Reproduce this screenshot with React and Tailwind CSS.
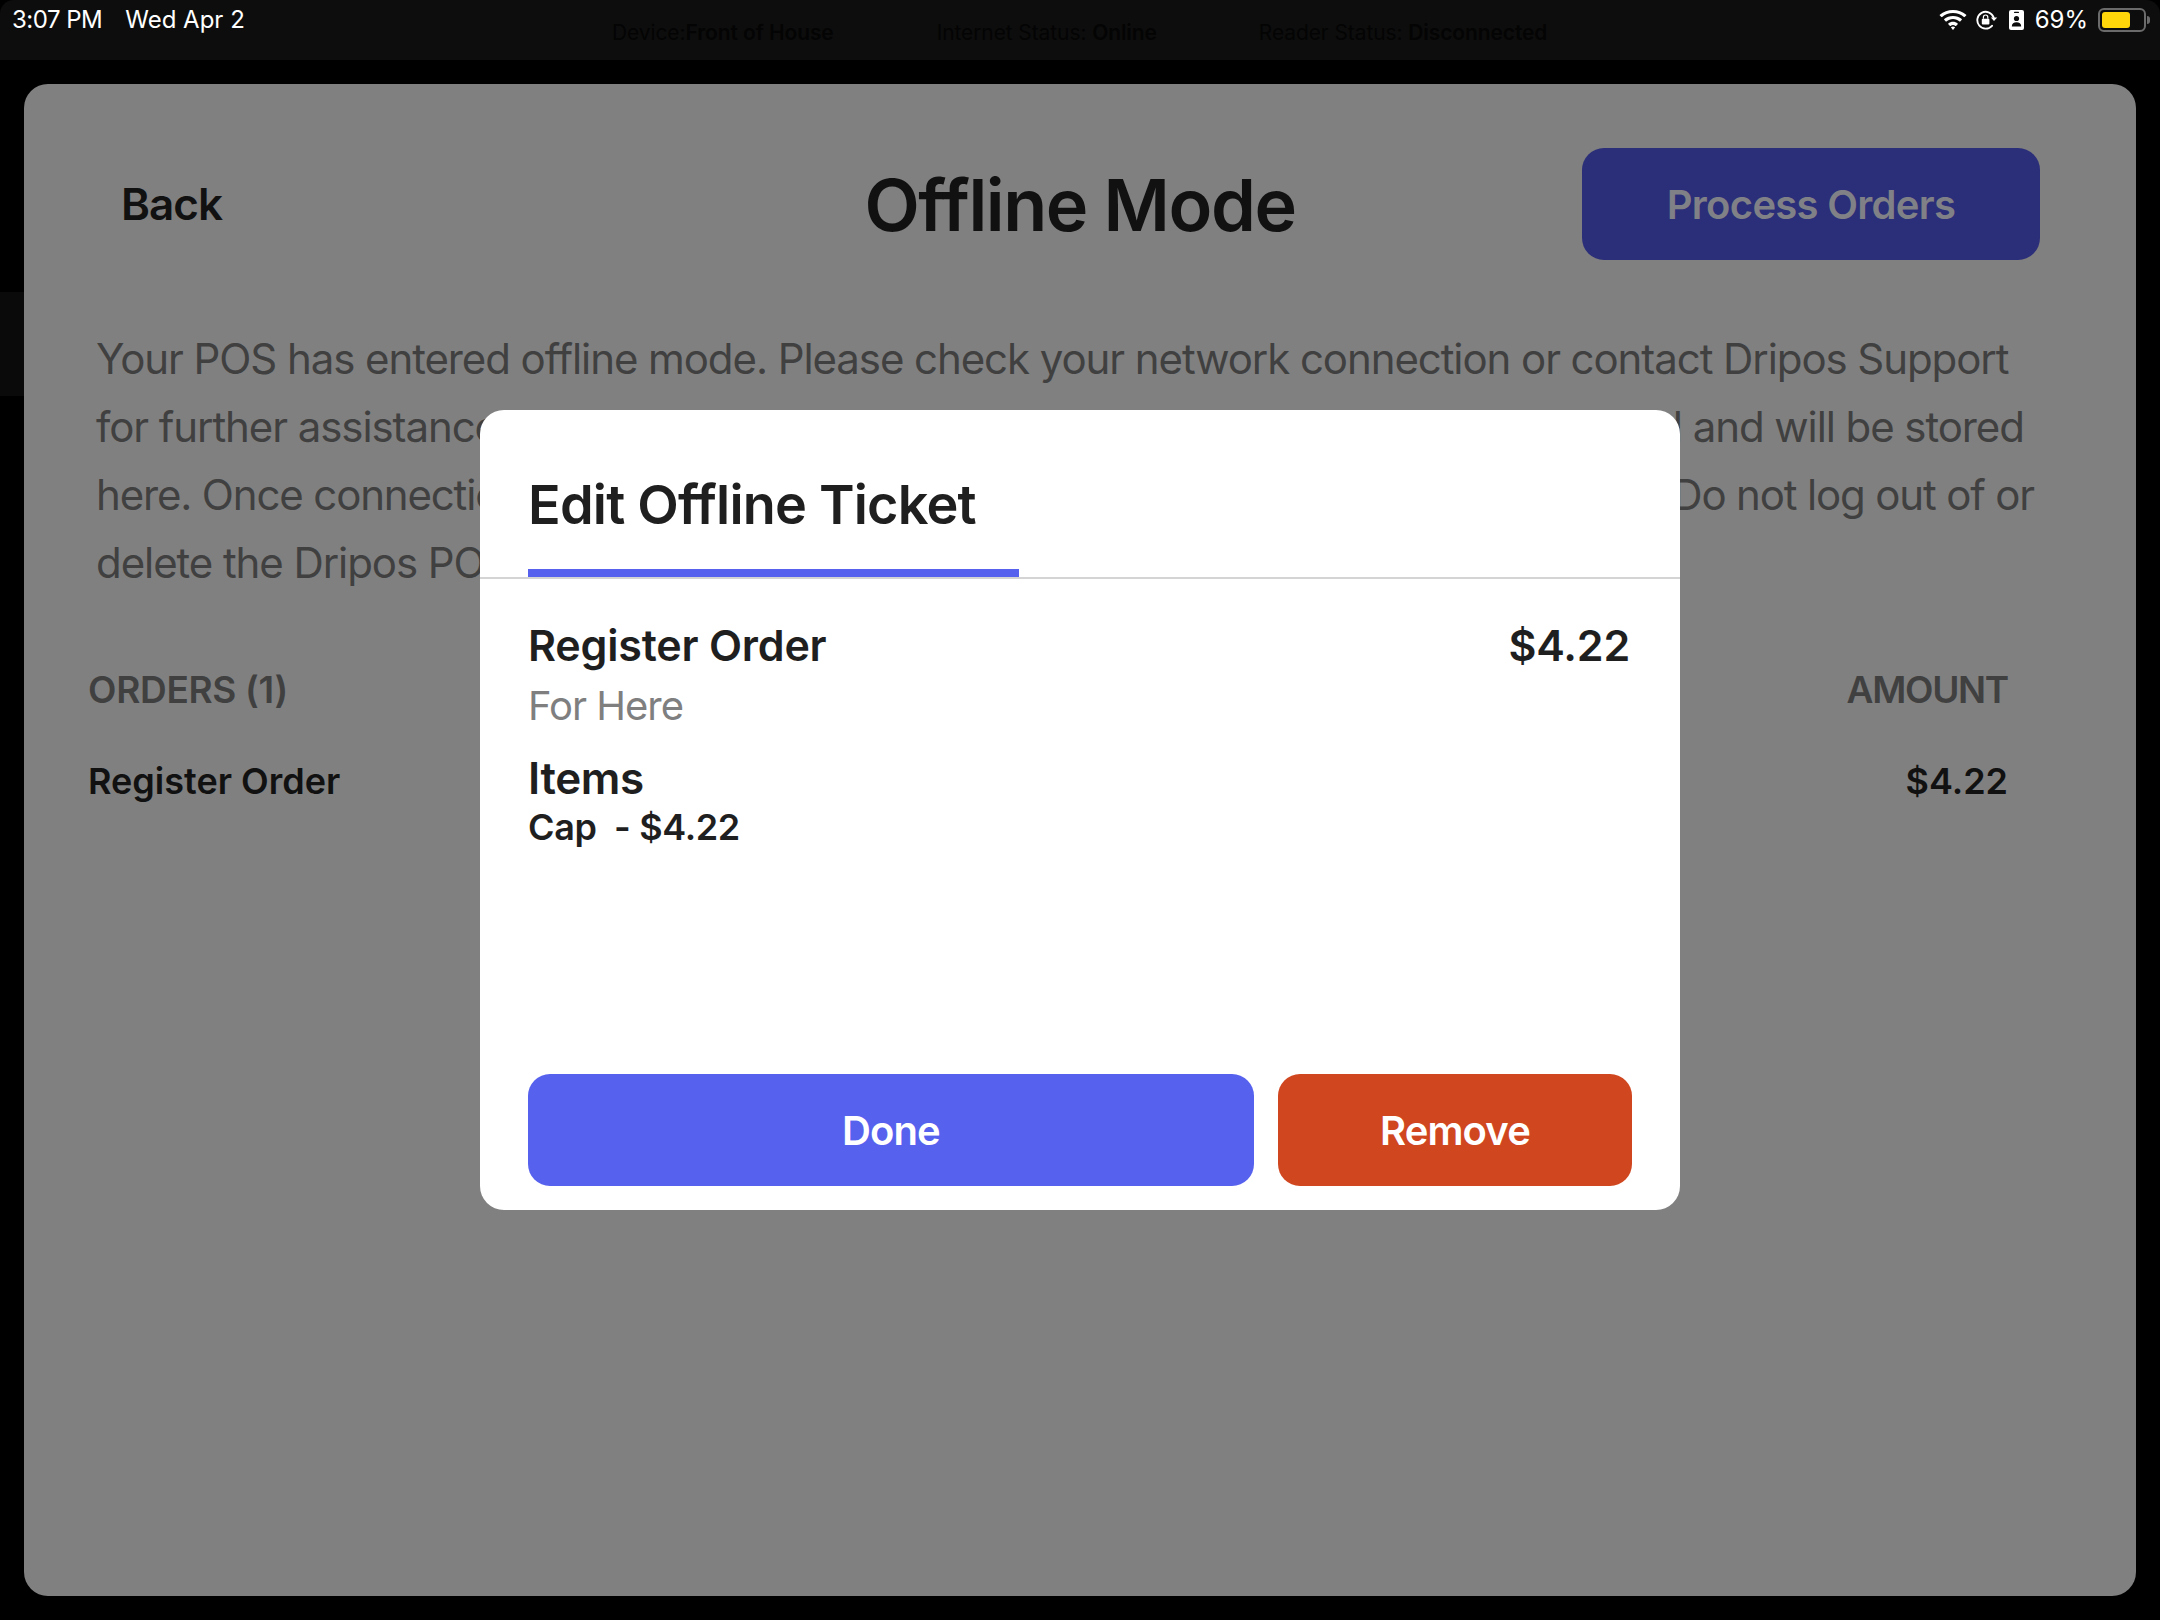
const F = { fontFamily: 'Inter, "Liberation Sans", sans-serif' };

function Wifi() {
  return (
    <svg width="28" height="20" viewBox="0 0 28 20" fill="#fff">
      <path d="M14 3c4.200 0 8 1.500 10.900 4.100.2.200.5.200.7 0l1.600-1.700c.2-.2.2-.5 0-.7C23.700 1.700 19 0 14 0S4.300 1.700.8 4.700c-.2.200-.2.500 0 .7l1.600 1.700c.2.200.5.200.7 0C6 4.500 9.800 3 14 3z" />
      <path d="M14 9c2.500 0 4.700.9 6.500 2.400.2.200.5.200.7 0l1.600-1.700c.2-.2.2-.5 0-.7C20.500 7 17.400 5.900 14 5.900S7.500 7 5.200 9c-.2.200-.2.500 0 .7l1.600 1.700c.2.200.5.200.7 0C9.300 9.900 11.500 9 14 9z" />
      <path d="M14 11.800c1.800 0 3.400.6 4.700 1.700.2.200.2.500 0 .7l-1.700 1.700c-.2.200-.4.200-.6 0-.7-.5-1.500-.8-2.400-.8s-1.700.3-2.400.8c-.2.200-.4.200-.6 0l-1.700-1.700c-.2-.2-.2-.5 0-.7 1.300-1.100 2.900-1.700 4.700-1.700z" />
      <path d="M14 16.600c.8 0 1.500.3 2.100.7l-1.800 2.400c-.2.200-.4.200-.6 0l-1.800-2.400c.6-.4 1.300-.7 2.100-.7z" />
    </svg>
  );
}

function RotationLock() {
  return (
    <svg width="22" height="20" viewBox="0 0 22 20" fill="none">
      <path d="M17.600 7.300A8.400 8.400 0 1 0 16 15.800" stroke="#fff" strokeWidth="1.900" strokeLinecap="round" />
      <path d="M14.800 7.400h6.400l-3.200 3.700z" fill="#fff" />
      <rect x="5.800" y="8.800" width="7.600" height="5.800" rx="1" fill="#fff" />
      <path d="M7.400 8.800V7.200a2.200 2.200 0 0 1 4.400 0v1.600" stroke="#fff" strokeWidth="1.200" />
    </svg>
  );
}

function Badge() {
  return (
    <svg width="15" height="20" viewBox="0 0 15 20">
      <rect x="0" y="0" width="15" height="20" rx="2" fill="#fff" />
      <rect x="5" y="1.800" width="5" height="1.300" rx=".6" fill="#0d0d0d" />
      <circle cx="7.500" cy="8.500" r="2.600" fill="#0d0d0d" />
      <path d="M2.800 16.500c0-2.800 2-4.200 4.700-4.200s4.700 1.400 4.700 4.200z" fill="#0d0d0d" />
    </svg>
  );
}

function Battery() {
  return (
    <div className="flex items-center gap-[1px]">
      <div className="w-[48px] h-[24px] rounded-[6px] border-2 border-[#6b6b6b] p-[2px] flex">
        <div className="w-[28px] h-full rounded-[3px] bg-[#ffd60a]" />
      </div>
      <div className="w-[3px] h-[8px] rounded-r-full bg-[#6b6b6b]" />
    </div>
  );
}

export default function App() {
  return (
    <div className="relative w-[2160px] h-[1620px] overflow-hidden bg-black" style={F}>
      {/* status bar */}
      <div className="h-[60px] bg-[#0d0d0d] rounded-t-[14px] relative">
        <div className="flex items-center h-[40px] pl-[12px] text-white text-[24px] leading-none">
          <span className="tracking-[-0.5px]">3:07 PM</span>
          <span className="ml-[23px]">Wed Apr 2</span>
        </div>
        <div className="absolute top-[23px] left-[612px] flex text-[21px] leading-[20px] text-[#040404] whitespace-nowrap tracking-[-0.1px]">
          <span>Device:<b className="font-semibold">Front of House</b></span>
          <span className="ml-[103px]">Internet Status: <b className="font-semibold">Online</b></span>
          <span className="ml-[102px]">Reader Status: <b className="font-semibold">Disconnected</b></span>
        </div>
        <div className="absolute top-[8px] right-[10px] h-[24px] flex items-center text-white">
          <Wifi />
          <span className="ml-[9px] flex"><RotationLock /></span>
          <span className="ml-[11px] flex"><Badge /></span>
          <span className="ml-[11px] text-[24px] leading-none">69%</span>
          <span className="ml-[10px]"><Battery /></span>
        </div>
      </div>

      {/* left sliver */}
      <div className="absolute left-0 top-[292px] w-[24px] h-[104px] bg-[#0a0a0a]" />

      {/* main */}
      <div className="absolute left-[24px] top-[84px] w-[2112px] h-[1512px] rounded-[24px] bg-[#808080] text-[#101010]">
        <div className="relative flex items-center h-[112px] mt-[64px] px-[97px] justify-between">
          <span className="text-[44px] font-semibold text-[#111] tracking-[-1px]">Back</span>
          <span className="absolute left-0 right-0 text-center text-[72px] font-semibold text-[#111] tracking-[-1.45px] pt-[1px]">Offline Mode</span>
          <div className="absolute right-[96px] top-0 w-[458px] h-[112px] rounded-[22px] bg-[#2b2e78] flex items-center justify-center text-[40px] font-semibold text-[#808087] tracking-[-0.7px] pt-[2px]">
            Process Orders
          </div>
        </div>

        <p className="mt-[65px] ml-[72px] text-[42px] leading-[68px] text-[#404040] whitespace-nowrap tracking-[-1.08px]">
          Your POS has entered offline mode. Please check your network connection or contact Dripos Support<br />
          for further assistance. New tickets created while in offline mode will still be accepted and will be stored<br />
          <span className="tracking-[-1.16px]">here. Once connection is restored, these tickets can be processed from this screen. Do not log out of or</span><br />
          delete the Dripos POS app while offline.
        </p>
        <div className="mt-[65px] ml-[64px] mr-[128px] flex justify-between text-[37px] font-semibold text-[#404040]">
          <span className="tracking-[-0.3px]">ORDERS (1)</span>
          <span className="tracking-[-1.3px]">AMOUNT</span>
        </div>
        <div className="mt-[36px] ml-[64px] mr-[128px] flex justify-between text-[36px] font-semibold text-[#111]">
          <span>Register Order</span>
          <span>$4.22</span>
        </div>
      </div>

      {/* modal */}
      <div className="absolute left-[480px] top-[410px] w-[1200px] h-[800px] rounded-[24px] bg-white text-[#1f1f1f] flex flex-col">
        <div className="h-[169px] border-b-2 border-[#d4d4d4] px-[48px] flex flex-col">
          <div className="mt-[63px] text-[54px] leading-[64px] font-semibold tracking-[-0.8px]">Edit Offline Ticket</div>
          <div className="mt-[32px] w-[491px] h-[8px] bg-[#5661ee]" />
        </div>
        <div className="px-[48px] flex flex-col grow">
          <div className="mt-[38px] flex justify-between text-[43px] leading-[56px] font-semibold pr-[2px] tracking-[-0.2px]">
            <span>Register Order</span>
            <span>$4.22</span>
          </div>
          <div className="mt-[5px] text-[40px] leading-[56px] text-[#7f7f7f] tracking-[-1px]">For Here</div>
          <div className="mt-[16px] text-[44px] leading-[56px] font-semibold tracking-[-0.4px]">Items</div>
          <div className="text-[36px] leading-[42px] font-semibold whitespace-pre tracking-[-0.35px]">Cap  - $4.22</div>
          <div className="mt-auto mb-[24px] flex gap-[24px]">
            <div className="w-[726px] h-[112px] rounded-[22px] bg-[#5661ee] flex items-center justify-center text-white text-[40px] font-semibold tracking-[-0.9px] pt-[2px]">Done</div>
            <div className="w-[354px] h-[112px] rounded-[22px] bg-[#d0461f] flex items-center justify-center text-white text-[40px] font-semibold tracking-[-0.9px] pt-[2px]">Remove</div>
          </div>
        </div>
      </div>
    </div>
  );
}
